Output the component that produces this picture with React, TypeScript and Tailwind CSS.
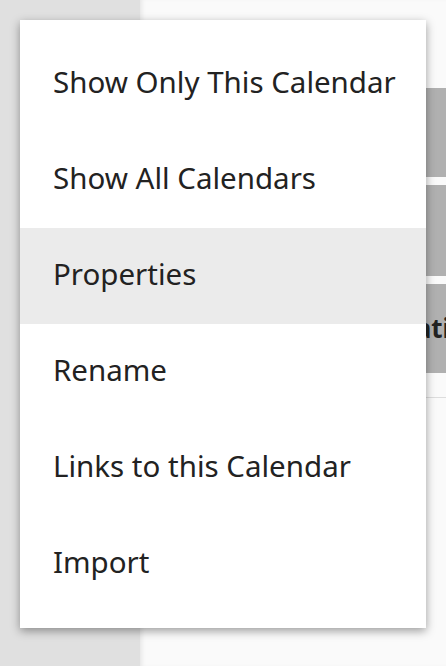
import React from 'react';

const items = [
  'Show Only This Calendar',
  'Show All Calendars',
  'Properties',
  'Rename',
  'Links to this Calendar',
  'Import',
];

export default function App() {
  const active = 'Properties';

  return (
    <div className="relative w-[446px] h-[666px] overflow-hidden flex font-['Noto_Sans',sans-serif]">
      {/* sidebar */}
      <div className="w-[140px] h-full bg-[#e0e0e0] shrink-0" />

      {/* main content behind the menu */}
      <div className="flex-1 h-full bg-[#fafafa] shadow-[inset_4px_0_4px_-2px_rgba(0,0,0,0.08)] pt-[88px] pl-[20px]">
        <div className="flex flex-col gap-[8px]">
          <div className="h-[89px] bg-[#b0b0b0]" />
          <div className="h-[91px] bg-[#b0b0b0]" />
          <div className="h-[89px] bg-[#b0b0b0] flex items-center pl-[168px]">
            <span className="text-[26px] font-bold text-[#222] whitespace-nowrap">Notifications</span>
          </div>
        </div>
        <div className="mt-[24px] border-t border-[#dddddd]" />
      </div>

      {/* context menu */}
      <div className="absolute left-[20px] top-[20px] w-[406px] bg-white py-[16px] shadow-[0_3px_9px_rgba(0,0,0,0.38)]">
        {items.map((label) => (
          <div
            key={label}
            className={`h-[96px] flex items-center pl-[33px] pb-[3px] text-[29.5px] text-[#222222] ${
              label === active ? 'bg-[#ebebeb]' : ''
            }`}
          >
            {label}
          </div>
        ))}
      </div>
    </div>
  );
}
